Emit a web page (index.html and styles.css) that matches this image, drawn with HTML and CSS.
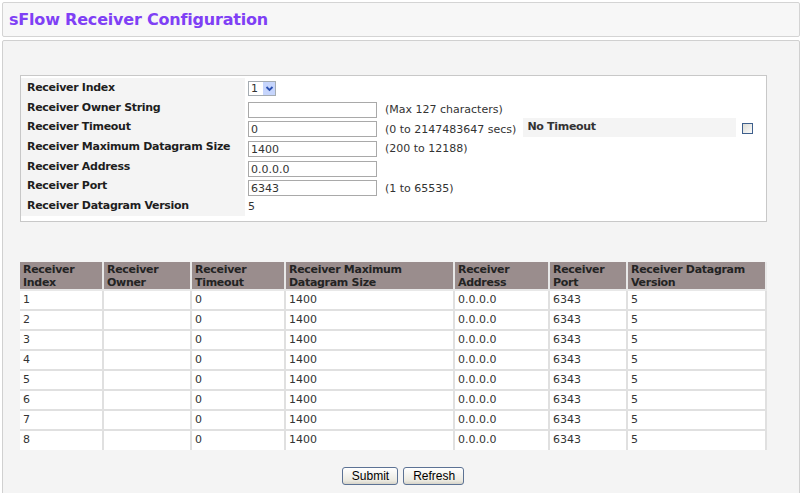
FILE: index.html
```html
<!DOCTYPE html>
<html>
<head>
<meta charset="utf-8">
<link rel="stylesheet" href="styles.css">
</head>
<body>
<div class="titlebar"><h1 class="title">sFlow Receiver Configuration</h1></div>
<div class="panel">
  <div class="formbox">
    <div class="frow">
      <div class="lbl">Receiver Index</div>
      <div class="val"><span class="select"><span class="selv">1</span><span class="selbtn"><svg width="11" height="11" viewBox="0 0 11 11"><path d="M2.5 4 L5.5 7 L8.5 4" fill="none" stroke="#2a4fb0" stroke-width="1.8"/></svg></span></span></div>
    </div>
    <div class="frow">
      <div class="lbl">Receiver Owner String</div>
      <div class="val"><span class="input"></span><span class="note">(Max 127 characters)</span></div>
    </div>
    <div class="frow">
      <div class="lbl">Receiver Timeout</div>
      <div class="val"><span class="input">0</span><span class="note">(0 to 2147483647 secs)</span><span class="nolbl">No Timeout</span><span class="chk"></span></div>
    </div>
    <div class="frow">
      <div class="lbl">Receiver Maximum Datagram Size</div>
      <div class="val"><span class="input">1400</span><span class="note">(200 to 12188)</span></div>
    </div>
    <div class="frow">
      <div class="lbl">Receiver Address</div>
      <div class="val"><span class="input">0.0.0.0</span></div>
    </div>
    <div class="frow">
      <div class="lbl">Receiver Port</div>
      <div class="val"><span class="input">6343</span><span class="note">(1 to 65535)</span></div>
    </div>
    <div class="frow">
      <div class="lbl">Receiver Datagram Version</div>
      <div class="val"><span class="plain">5</span></div>
    </div>
  </div>

  <table class="grid">
    <colgroup>
      <col class="c1"><col class="c2"><col class="c3"><col class="c4"><col class="c5"><col class="c6"><col class="c7">
    </colgroup>
    <thead>
      <tr><th>Receiver<br>Index</th><th>Receiver<br>Owner</th><th>Receiver<br>Timeout</th><th>Receiver Maximum<br>Datagram Size</th><th>Receiver<br>Address</th><th>Receiver<br>Port</th><th>Receiver Datagram<br>Version</th></tr>
    </thead>
    <tbody>
      <tr><td>1</td><td></td><td>0</td><td>1400</td><td>0.0.0.0</td><td>6343</td><td>5</td></tr>
      <tr><td>2</td><td></td><td>0</td><td>1400</td><td>0.0.0.0</td><td>6343</td><td>5</td></tr>
      <tr><td>3</td><td></td><td>0</td><td>1400</td><td>0.0.0.0</td><td>6343</td><td>5</td></tr>
      <tr><td>4</td><td></td><td>0</td><td>1400</td><td>0.0.0.0</td><td>6343</td><td>5</td></tr>
      <tr><td>5</td><td></td><td>0</td><td>1400</td><td>0.0.0.0</td><td>6343</td><td>5</td></tr>
      <tr><td>6</td><td></td><td>0</td><td>1400</td><td>0.0.0.0</td><td>6343</td><td>5</td></tr>
      <tr><td>7</td><td></td><td>0</td><td>1400</td><td>0.0.0.0</td><td>6343</td><td>5</td></tr>
      <tr><td>8</td><td></td><td>0</td><td>1400</td><td>0.0.0.0</td><td>6343</td><td>5</td></tr>
    </tbody>
  </table>

  <div class="buttons">
    <button class="btn">Submit</button>
    <button class="btn">Refresh</button>
  </div>
</div>
</body>
</html>
```
FILE: styles.css
```css
html, body {
  margin: 0;
  padding: 0;
  background: #ffffff;
  overflow: hidden;
}
body {
  font-family: "DejaVu Sans", Verdana, sans-serif;
  font-size: 11px;
  color: #222;
  padding: 2px 2px 0 2px;
  height: 493px;
  box-sizing: border-box;
}
.titlebar {
  height: 33px;
  border: 1px solid #d4d4d4;
  border-radius: 2px;
  background: #f7f7f7;
  display: flex;
  align-items: center;
  padding-left: 6px;
}
.title {
  margin: 0;
  font-size: 16px;
  font-weight: bold;
  color: #7f40f5;
  letter-spacing: -0.2px;
}
.panel {
  margin-top: 3px;
  border: 1px solid #d0d0d0;
  border-radius: 2px;
  background: #f4f4f4;
  height: 460px;
  padding: 34px 0 0 17px;
  box-sizing: border-box;
}
.formbox {
  width: 747px;
  box-sizing: border-box;
  border: 1px solid #c8c8c8;
  background: #fff;
  padding: 2px 0 5px 0;
  display: flex;
  flex-direction: column;
}
.frow {
  display: flex;
  height: 19.7px;
}
.lbl {
  width: 224px;
  background: #f4f4f4;
  font-weight: bold;
  letter-spacing: -0.3px;
  padding: 3px 0 0 6px;
  box-sizing: border-box;
  color: #1e1e1e;
}
.val {
  flex: 1;
  display: flex;
  align-items: center;
  padding-left: 3px;
  color: #333;
}
.input {
  width: 129px;
  height: 16px;
  box-sizing: border-box;
  border: 1px solid #a9a9a9;
  background: #fff;
  padding: 1px 0 0 2px;
  line-height: 13px;
  margin-top: 4px;
}
.note {
  margin-left: 8px;
  margin-top: 4px;
}
.nolbl {
  margin-left: 7px;
  width: 213px;
  height: 19px;
  background: #f4f4f4;
  font-weight: bold;
  letter-spacing: -0.3px;
  padding: 2px 0 0 4px;
  box-sizing: border-box;
  align-self: flex-start;
  margin-top: 1px;
}
.chk {
  width: 11px;
  height: 11px;
  box-sizing: border-box;
  border: 1px solid #3e5f8c;
  background: linear-gradient(135deg, #dcdcd6, #fbfbfb);
  margin-left: 6px;
  margin-top: 2px;
}
.select {
  display: flex;
  align-items: center;
  width: 28px;
  height: 15px;
  box-sizing: border-box;
  border: 1px solid #a5acb2;
  background: #fff;
  margin-top: 1px;
}
.selv {
  flex: 1;
  padding-left: 2px;
  font-size: 11px;
}
.selbtn {
  width: 12px;
  height: 13px;
  background: #c6d5fc;
  display: flex;
  align-items: center;
  justify-content: center;
}
.plain {
  padding-left: 0;
  margin-top: 1px;
}
.grid {
  margin-top: 40px;
  width: 746px;
  border-collapse: collapse;
  table-layout: fixed;
  margin-left: 0;
}
.c1 { width: 83px; }
.c2 { width: 88px; }
.c3 { width: 94px; }
.c4 { width: 169px; }
.c5 { width: 95px; }
.c6 { width: 78px; }
.c7 { width: 139px; }
.grid th, .grid td {
  border: 2px solid #e0e0e0;
  text-align: left;
  vertical-align: top;
  padding: 0 3px;
  font-size: 11px;
}
.grid th {
  background: #9a8d8d;
  color: #232323;
  font-weight: bold;
  letter-spacing: -0.3px;
  height: 28px;
  line-height: 13px;
  padding-top: 1px;
  box-sizing: border-box;
  border-top: 0;
  border-color: #e8e8e8;
}
.grid th:first-child, .grid td:first-child { border-left: 0; }
.grid td {
  background: #fff;
  height: 20px;
  box-sizing: border-box;
  line-height: 15px;
  padding-top: 1px;
  color: #333;
}
.grid tr:last-child td { border-bottom: 0; }
.buttons {
  display: flex;
  justify-content: center;
  gap: 5px;
  margin-top: 17px;
  margin-left: -13px;
}
.btn {
  font-family: "Liberation Sans", Arial, sans-serif;
  font-size: 12px;
  height: 18px;
  padding: 0 8px 0 9px;
  border: 1px solid #5c7294;
  border-radius: 3px;
  background: linear-gradient(#ffffff, #ebe9e0 80%, #d6d3c8);
  color: #000;
  line-height: 14px;
}
```
